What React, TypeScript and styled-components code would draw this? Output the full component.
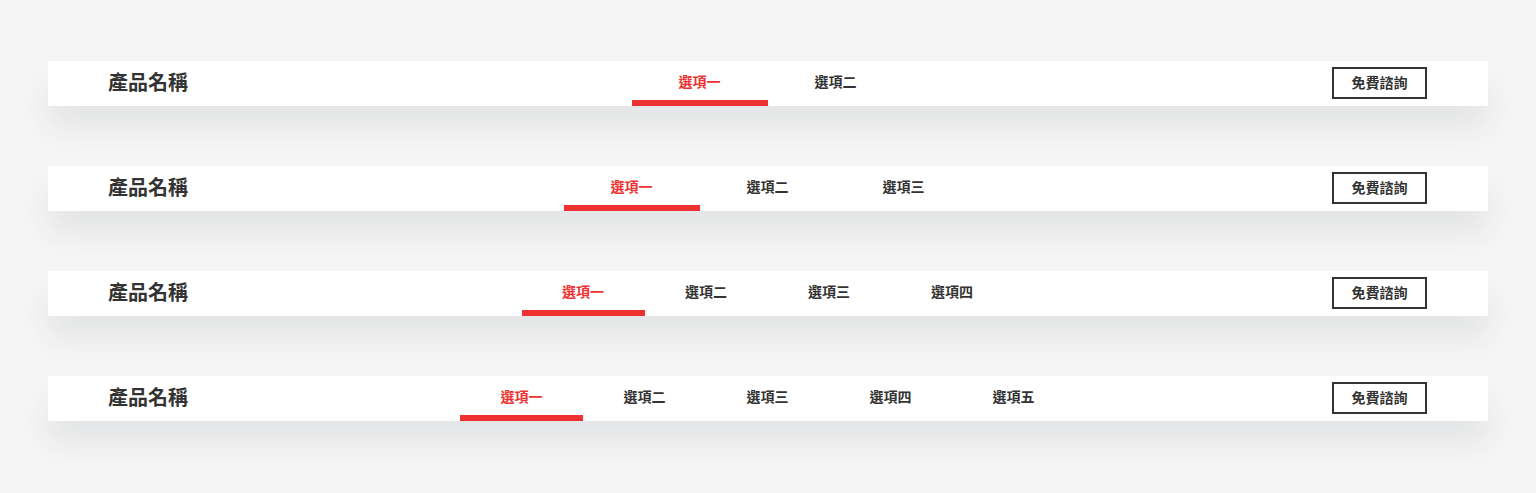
import styled, { createGlobalStyle } from "styled-components";

const GlobalStyle = createGlobalStyle`
  body {
    margin: 0;
    background: #f5f5f5;
    font-family: "Noto Sans CJK TC", "Noto Sans", sans-serif;
  }
`;

const Page = styled.div`
  display: flex;
  flex-direction: column;
  gap: 60px;
  padding: 61px 48px 72px;
`;

const NavBar = styled.nav`
  display: grid;
  grid-template-columns: 1fr auto 1fr;
  align-items: center;
  height: 45px;
  padding: 0 61px 0 60px;
  background: #fff;
  box-shadow: 0 22px 28px rgba(40, 50, 70, 0.08);
`;

const Brand = styled.div`
  font-size: 20px;
  font-weight: 700;
  color: #333;
  line-height: 1;
  padding-bottom: 3px;
`;

const Tabs = styled.div`
  display: flex;
  height: 45px;
`;

const Tab = styled.div<{ $active?: boolean; $width: number }>`
  position: relative;
  display: flex;
  align-items: center;
  justify-content: center;
  width: ${(p) => p.$width}px;
  padding-bottom: 6px;
  font-size: 14px;
  font-weight: 700;
  line-height: 1;
  color: ${(p) => (p.$active ? "#ee3131" : "#333")};

  &::after {
    content: "";
    position: absolute;
    left: 0;
    right: 0;
    bottom: 0;
    height: 6px;
    background: ${(p) => (p.$active ? "#ee3131" : "transparent")};
  }
`;

const ContactButton = styled.button`
  justify-self: end;
  align-self: start;
  margin-top: 6px;
  display: flex;
  align-items: center;
  justify-content: center;
  box-sizing: border-box;
  width: 95px;
  height: 32px;
  border: 2px solid #333;
  background: #fff;
  color: #333;
  font-family: inherit;
  font-size: 14px;
  font-weight: 700;
  padding: 0 0 3px;
  line-height: 1;
`;

const labels = ["選項一", "選項二", "選項三", "選項四", "選項五"];

const bars = [
  { count: 2, width: 136 },
  { count: 3, width: 136 },
  { count: 4, width: 123 },
  { count: 5, width: 123 },
];

export default function App() {
  return (
    <>
      <GlobalStyle />
      <Page>
        {bars.map((bar, i) => (
          <NavBar key={i}>
            <Brand>產品名稱</Brand>
            <Tabs>
              {labels.slice(0, bar.count).map((label, j) => (
                <Tab key={label} $active={j === 0} $width={bar.width}>
                  {label}
                </Tab>
              ))}
            </Tabs>
            <ContactButton>免費諮詢</ContactButton>
          </NavBar>
        ))}
      </Page>
    </>
  );
}
